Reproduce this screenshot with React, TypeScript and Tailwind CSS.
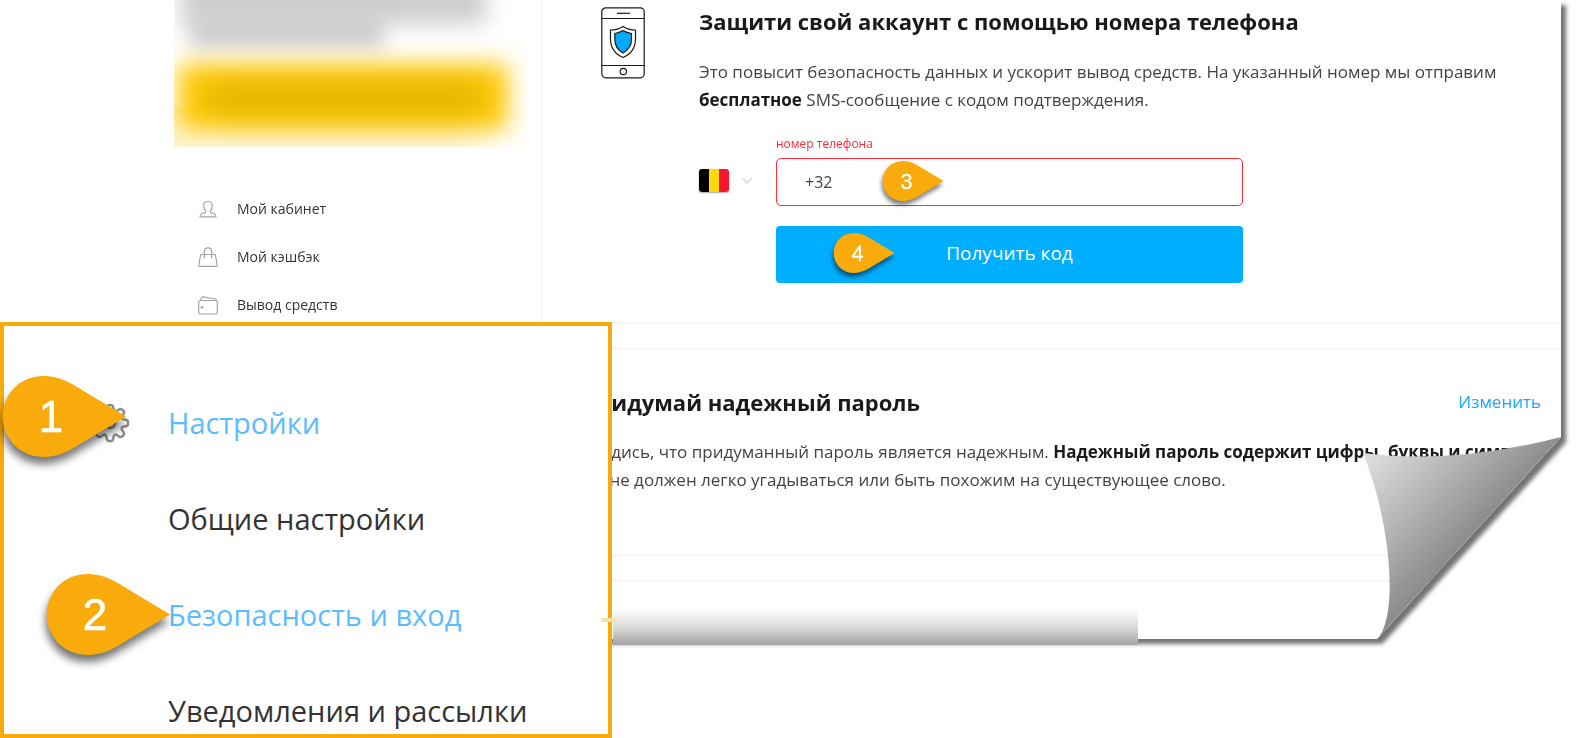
import { useState, type ReactNode } from "react";
import clsx from "clsx";

interface PinProps {
  label: string;
  size?: "sm" | "lg";
  className?: string;
}

function Pin({ label, size = "sm", className }: PinProps) {
  return (
    <svg
      viewBox="0 0 124 81"
      className={clsx(
        "pointer-events-none absolute overflow-visible",
        size === "lg"
          ? "h-[81px] w-[124px] drop-shadow-[-1px_7px_4px_rgba(0,0,0,0.55)]"
          : "h-[40px] w-[62px] drop-shadow-[-1px_4px_2px_rgba(0,0,0,0.5)]",
        className
      )}
    >
      <path
        d="M124 40.5L70 8C59 2 50 0 41 0A40.5 40.5 0 0 0 41 81C50 81 59 79 70 73Z"
        fill="#f8ab0a"
      />
      <text
        x="49"
        y="56"
        textAnchor="middle"
        fill="#fff"
        stroke="#fff"
        strokeWidth="0.6"
        fontSize="44"
        fontFamily='"Liberation Sans", Arial, sans-serif'
      >
        {label}
      </text>
    </svg>
  );
}

function UserIcon() {
  return (
    <svg viewBox="0 0 20 20" className="h-5 w-5" fill="none" stroke="#a3a3a3" strokeWidth="1.200">
      <path d="M7.6 11.8C6.400 10.600 5.700 9 5.700 6.800 5.700 4.200 7.400 2.500 10 2.500S14.300 4.200 14.300 6.800C14.300 9 13.600 10.600 12.400 11.800 12 13.200 12.600 13.900 13.800 14.200L16.500 15C17.500 15.400 17.900 16.200 17.900 17.800H2.100C2.100 16.200 2.500 15.400 3.500 15L6.200 14.200C7.400 13.900 8 13.200 7.600 11.800Z" />
    </svg>
  );
}

function BagIcon() {
  return (
    <svg viewBox="0 0 20 20" className="h-5 w-5" fill="none" stroke="#a3a3a3" strokeWidth="1.200">
      <path d="M2.700 7.500H17.300L19.300 18.500C19.300 19 19 19.300 18.500 19.300H1.500C1 19.300 .7 19 .7 18.500Z" />
      <path d="M6.300 11.500V5C6.300 2.500 7.800 .8 10 .8S13.700 2.500 13.700 5V11.500" />
    </svg>
  );
}

function WalletIcon() {
  return (
    <svg viewBox="0 0 20 20" className="h-5 w-5" fill="none" stroke="#a3a3a3" strokeWidth="1.200">
      <rect x=".7" y="5.500" width="18.600" height="13.500" rx="1.500" />
      <path d="M2 5.500C2.600 4.500 3.200 3.500 3.800 2.500 4 2 4.400 1.700 5 1.800L17.500 4C18.300 4.200 18.600 4.700 18.600 5.500" />
      <circle cx="4" cy="12.300" r=".8" />
    </svg>
  );
}

function GearIcon() {
  return (
    <svg viewBox="-20 -20 40 40" className="h-10 w-10" fill="none" stroke="#8c8c8c" strokeWidth="2.400">
      {[0, 45, 90, 135, 180, 225, 270, 315].map((angle) => (
        <path
          key={angle}
          transform={`rotate(${angle})`}
          d="M-4.800 -11.500C-3.500 -12.500 -3.400 -14.500 -3 -16.500 -2.600 -18.600 2.600 -18.600 3 -16.500 3.400 -14.500 3.500 -12.500 4.800 -11.500"
        />
      ))}
      <circle r="5" />
    </svg>
  );
}

function PhoneShieldIcon() {
  return (
    <svg viewBox="0 0 44 72" className="h-[72px] w-11 shrink-0" fill="none" stroke="#1a1a1a">
      <rect x=".8" y=".8" width="42.400" height="70" rx="4" strokeWidth="1.200" />
      <path d="M1 11.500H43M1 58.500H43" strokeWidth="1.200" />
      <path d="M16 6.300H29" strokeWidth="1.200" />
      <circle cx="22.300" cy="64.500" r="3.200" strokeWidth="1.200" />
      <path
        d="M22 19.500C18.500 22 14 23 9.500 23V32C9.500 40.500 14 47 22 50.500 30 47 34.500 40.500 34.500 32V23C30 23 25.500 22 22 19.500Z"
        strokeWidth="1.200"
      />
      <path
        d="M22 23.500C19.500 25 17 26 13.800 26.500V32C13.800 38.500 16.500 43 22 46 27.500 43 30.500 38.500 30.500 32V26.500C27.200 26 24.500 25 22 23.500Z"
        fill="#00aaff"
        strokeWidth="1.200"
      />
    </svg>
  );
}

function PageCurl() {
  return (
    <svg viewBox="0 0 198 202" className="absolute right-0 bottom-0 h-[202px] w-[198px]">
      <defs>
        <linearGradient id="curl" gradientUnits="userSpaceOnUse" x1="0" y1="16" x2="98" y2="110">
          <stop offset="0" stopColor="#e2e2e2" />
          <stop offset="0.5" stopColor="#b8b8b8" />
          <stop offset="1" stopColor="#8c8c8c" />
        </linearGradient>
      </defs>
      <path d="M0 16Q90 28 198 0L198 202H14C36 180 28 85 0 16Z" fill="url(#curl)" />
    </svg>
  );
}

function Card({ className, children }: { className?: string; children?: ReactNode }) {
  return (
    <section className={clsx("bg-white shadow-[0_0_5px_rgba(0,0,0,0.1)]", className)}>
      {children}
    </section>
  );
}

const navItems = [
  { title: "Мой кабинет", icon: <UserIcon /> },
  { title: "Мой кэшбэк", icon: <BagIcon /> },
  { title: "Вывод средств", icon: <WalletIcon /> },
];

const settingsItems = [
  { title: "Настройки", active: true, gear: true },
  { title: "Общие настройки" },
  { title: "Безопасность и вход", active: true },
  { title: "Уведомления и рассылки" },
];

function Sidebar() {
  return (
    <aside className="w-[543px] shrink-0">
      <div className="relative ml-[174px] h-[147px] w-[356px] overflow-hidden">
        <div className="absolute bottom-0 left-0 h-10 w-[330px] bg-linear-to-r from-[#fdf3cf] from-85% to-transparent opacity-70" />
        <div className="absolute -top-10 left-2 h-[64px] w-[304px] bg-[#cdcdcd] blur-[11px]" />
        <div className="absolute top-3 left-4 h-9 w-[194px] bg-[#cdcdcd] blur-[10px]" />
        <div className="absolute top-[64px] left-1 h-[66px] w-[330px] bg-[#ffca05] blur-[12px]" />
        <div className="absolute top-[84px] left-[32px] h-7 w-[276px] bg-[#d8ab00] opacity-80 blur-[14px]" />
      </div>
      <nav className="mt-[38px] pl-[198px]">
        {navItems.map((item) => (
          <a key={item.title} href="#" className="flex h-12 items-center gap-[19px] text-sm text-[#333]">
            {item.icon}
            {item.title}
          </a>
        ))}
      </nav>
    </aside>
  );
}

function PhoneForm() {
  const [phone, setPhone] = useState("+32");

  return (
    <form className="mt-[18px] flex items-start gap-6" onSubmit={(e) => e.preventDefault()}>
      <button type="button" aria-label="Страна" className="mt-[37px] flex items-center gap-[13px]">
        <svg viewBox="0 0 30 23" className="h-[23px] w-[30px] rounded-[3px] shadow-[0_1px_2px_rgba(0,0,0,0.35)]">
          <path d="M0 0H10V23H0Z" fill="#000" />
          <path d="M10 0H20V23H10Z" fill="#ffd90c" />
          <path d="M20 0H30V23H20Z" fill="#f31830" />
        </svg>
        <svg viewBox="0 0 10 6" className="h-[6px] w-[10px]" fill="none" stroke="#d9d9d9" strokeWidth="1.500">
          <path d="M.5 .5L5 5L9.500 .5" />
        </svg>
      </button>
      <div className="flex w-[467px] flex-col">
        <label htmlFor="phone" className="mb-[2px] text-xs leading-6 text-[#ff2a35]">
          номер телефона
        </label>
        <div className="relative">
          <input
            id="phone"
            type="tel"
            value={phone}
            onChange={(e) => setPhone(e.target.value)}
            className="h-12 w-full rounded-[5px] border border-[#ff2a35] px-7 text-base text-[#444] outline-none"
          />
          <Pin label="3" className="top-[3px] left-[106px]" />
        </div>
        <div className="relative mt-5">
          <button type="submit" className="h-[57px] w-full rounded-[4px] bg-[#00aeff] pb-[2px] text-[19px] text-white">
            Получить код
          </button>
          <Pin label="4" className="top-[7px] left-[57px]" />
        </div>
      </div>
    </form>
  );
}

function SettingsZoom() {
  return (
    <div className="absolute top-[322px] left-0 w-[612px] border-4 border-[#f8ab0a] bg-white pt-[81px] pr-4 pb-[7px]">
      <ul className="flex flex-col gap-16">
        {settingsItems.map((item) => (
          <li key={item.title} className="flex h-8 items-center">
            <span className="flex w-[164px] justify-end pr-[38px]">{item.gear && <GearIcon />}</span>
            <a
              href="#"
              className={clsx("text-[29px] leading-8", item.active ? "text-[#5cbcff]" : "text-[#333]")}
            >
              {item.title}
            </a>
          </li>
        ))}
      </ul>
      <Pin label="1" size="lg" className="top-[50px] -left-[2px]" />
      <Pin label="2" size="lg" className="top-[248px] left-[42px]" />
      <div className="absolute top-[292px] -right-2 h-1 w-[15px] bg-[#f8e0b0]" />
    </div>
  );
}

export default function App() {
  return (
    <div className="relative min-h-screen overflow-hidden bg-white font-['Open_Sans',sans-serif]">
      <div className="relative mr-[15px]">
        <div className="drop-shadow-[5px_5px_2px_rgba(0,0,0,0.55)]">
          <div className="relative flex bg-white [clip-path:polygon(0_0,100%_0,100%_calc(100%_-_202px),calc(100%_-_184px)_100%,0_100%)]">
            <Sidebar />
            <main className="flex min-w-0 flex-1 flex-col gap-7">
              <Card className="flex gap-[54px] pt-[7px] pr-4 pb-[39px] pl-[58px]">
                <PhoneShieldIcon />
                <div>
                  <h2 className="text-[22px] leading-7 font-bold text-[#1a1a1a]">
                    Защити свой аккаунт с помощью номера телефона
                  </h2>
                  <p className="mt-[23px] text-[17px] leading-7 text-[#444]">
                    Это повысит безопасность данных и ускорит вывод средств. На указанный номер мы
                    отправим <b className="font-bold text-[#1a1a1a]">бесплатное</b> SMS-сообщение с
                    кодом подтверждения.
                  </p>
                  <PhoneForm />
                </div>
              </Card>
              <Card className="pt-[38px] pr-1 pb-[60px] pl-[38px]">
                <div className="flex items-center justify-between">
                  <h2 className="text-[22px] leading-7 font-bold text-[#1a1a1a]">
                    Придумай надежный пароль
                  </h2>
                  <a href="#" className="pr-4 text-[17px] leading-7 text-[#1aa7ff]">
                    Изменить
                  </a>
                </div>
                <p className="mt-[22px] text-[17px] leading-7 text-[#444]">
                  Убедись, что придуманный пароль является надежным.{" "}
                  <b className="font-bold text-[#1a1a1a]">
                    Надежный пароль содержит цифры, буквы и символы.
                  </b>{" "}
                  Он не должен легко угадываться или быть похожим на существующее слово.
                </p>
              </Card>
              <Card className="h-[57px]" />
            </main>
            <PageCurl />
          </div>
        </div>
        <div className="absolute -bottom-[6px] left-[613px] h-[45px] w-[525px] overflow-hidden">
          <div className="h-full bg-linear-to-b from-white/0 from-20% via-[#d6d6d5] via-65% to-[#a9a9a7] to-95%" />
        </div>
      </div>
      <SettingsZoom />
    </div>
  );
}
